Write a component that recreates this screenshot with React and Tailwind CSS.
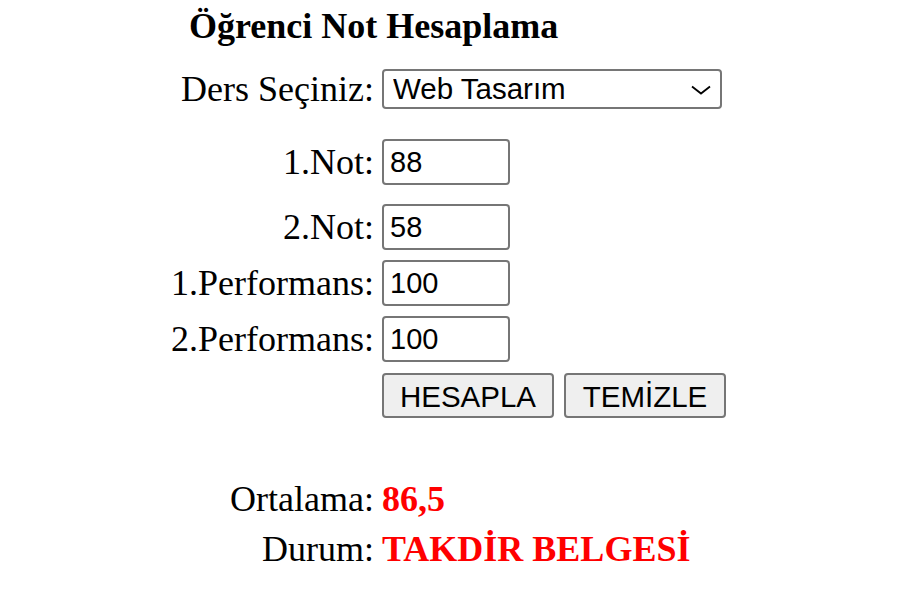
import React from "react";

const serif = { fontFamily: '"Liberation Serif", "Times New Roman", serif' };

const Row = ({ label, children, className = "" }) => (
  <div className={`flex items-center ${className}`}>
    <label className="w-[382px] shrink-0 pr-[8px] text-right leading-[41px]">{label}</label>
    {children}
  </div>
);

const NumInput = ({ value }) => (
  <input
    type="text"
    defaultValue={value}
    className="block w-[128px] h-[46px] border-2 border-[#767676] rounded-[4px] px-[6px] text-[29px] text-black bg-white font-['Liberation_Sans',Arial,sans-serif] outline-none"
  />
);

export default function App() {
  return (
    <div className="w-[923px] h-[605px] bg-white text-black text-[36px] overflow-hidden" style={serif}>
      {/* Başlık */}
      <h4 className="pl-[189px] pt-[6px] font-bold leading-[40px] text-[36px]">Öğrenci Not Hesaplama</h4>

      <Row label="Ders Seçiniz:" className="mt-[23px] h-[40px]">
        <div className="relative flex">
          <select
            defaultValue="web"
            className="block appearance-none w-[340px] h-[40px] border-2 border-[#767676] rounded-[4px] pl-[9px] text-[29.5px] leading-[34px] bg-white text-black font-['Liberation_Sans',Arial,sans-serif] outline-none"
          >
            <option value="web">Web Tasarım</option>
          </select>
          <svg
            className="absolute right-[11px] top-[16px] pointer-events-none"
            width="20"
            height="10"
            viewBox="0 0 20 10"
            fill="none"
            stroke="black"
            strokeWidth="1.8"
          >
            <path d="M1 1.5 L10 8.5 L19 1.5" />
          </svg>
        </div>
      </Row>

      <Row label="1.Not:" className="mt-[30px] h-[46px]">
        <NumInput value="88" />
      </Row>
      <Row label="2.Not:" className="mt-[19px] h-[46px]">
        <NumInput value="58" />
      </Row>
      <Row label="1.Performans:" className="mt-[10px] h-[46px]">
        <NumInput value="100" />
      </Row>
      <Row label="2.Performans:" className="mt-[10px] h-[46px]">
        <NumInput value="100" />
      </Row>

      {/* Butonlar */}
      <div className="mt-[11px] pl-[382px] flex gap-[10px] font-['Liberation_Sans',Arial,sans-serif]">
        <button className="w-[172px] h-[45px] bg-[#efefef] border-2 border-[#767676] rounded-[4px] text-[29.5px] text-black">
          HESAPLA
        </button>
        <button className="w-[162px] h-[45px] bg-[#efefef] border-2 border-[#767676] rounded-[4px] text-[29.5px] text-black">
          TEMİZLE
        </button>
      </div>

      {/* Sonuç */}
      <Row label="Ortalama:" className="mt-[61px] h-[40px]">
        <span className="font-bold text-[#ff0000] leading-[40px]">86,5</span>
      </Row>
      <Row label="Durum:" className="mt-[10px] h-[40px]">
        <span className="font-bold text-[#ff0000] leading-[40px]">TAKDİR BELGESİ</span>
      </Row>
    </div>
  );
}
